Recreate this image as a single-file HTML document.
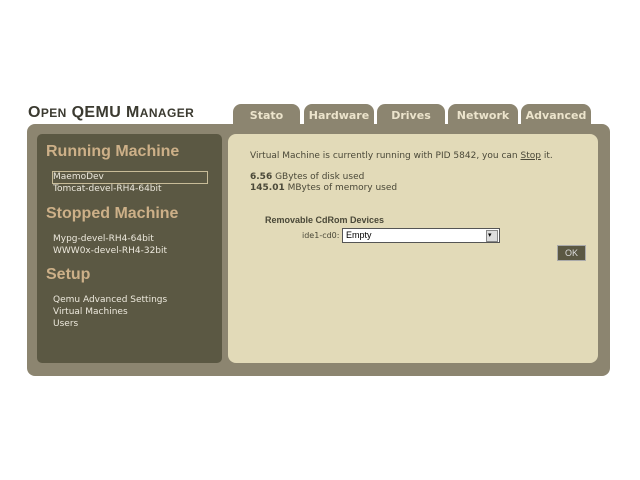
<!DOCTYPE html>
<html><head><style>
body{margin:0;width:640px;height:480px;background:#fff;position:relative;font-family:"DejaVu Sans",Verdana,sans-serif;overflow:hidden}
.a{position:absolute}
.title{left:28px;top:104px;font:bold 16px "Liberation Sans",sans-serif;color:#3b3a30;letter-spacing:0.4px}
.title small{font-size:12px}
.outer{left:27px;top:124px;width:583px;height:252px;background:#8c8570;border-radius:8px}
.left{left:37px;top:134px;width:185px;height:229px;background:#5b5843;border-radius:5px}
.right{left:228px;top:134px;width:370px;height:229px;background:#e2dab8;border-radius:8px}
.tab{top:104px;height:24px;background:#8c8570;border-radius:8px 8px 0 0;color:#ece4cc;font:bold 11px "DejaVu Sans",sans-serif;text-align:center;line-height:24px}
h2{position:absolute;margin:0;font:bold 16px "Liberation Sans",sans-serif;color:#cdb088;left:46px}
.lk{position:absolute;left:53px;font-size:9px;color:#ece8dc;line-height:12px}
.t{font-size:9px;color:#4a4838;position:absolute}
</style></head><body>
<div class="a title">O<small>PEN</small> QEMU M<small>ANAGER</small></div>
<div class="a tab" style="left:233px;width:67px">Stato</div>
<div class="a tab" style="left:304px;width:70px">Hardware</div>
<div class="a tab" style="left:377px;width:68px">Drives</div>
<div class="a tab" style="left:448px;width:70px">Network</div>
<div class="a tab" style="left:521px;width:70px">Advanced</div>
<div class="a outer"></div>
<div class="a left"></div>
<div class="a right"></div>
<h2 style="top:143px">Running Machine</h2>
<div class="a" style="left:52px;top:171px;width:154px;height:11px;border:1px solid #c8bc98"></div>
<div class="lk" style="top:171px">MaemoDev<br>Tomcat-devel-RH4-64bit</div>
<h2 style="top:205px">Stopped Machine</h2>
<div class="lk" style="top:233px">Mypg-devel-RH4-64bit<br>WWW0x-devel-RH4-32bit</div>
<h2 style="top:266px">Setup</h2>
<div class="lk" style="top:294px">Qemu Advanced Settings<br>Virtual Machines<br>Users</div>
<div class="t" style="left:250px;top:151px">Virtual Machine is currently running with PID 5842, you can <u>Stop</u> it.</div>
<div class="t" style="left:250px;top:172px;line-height:11px"><b>6.56</b> GBytes of disk used<br><b>145.01</b> MBytes of memory used</div>
<div class="t" style="left:265px;top:215px;font:bold 9px 'Liberation Sans',sans-serif;color:#4a4838">Removable CdRom Devices</div>
<div class="t" style="left:302px;top:231px;font-size:8px">ide1-cd0:</div>
<div class="a" style="left:342px;top:228px;width:156px;height:13px;background:#fff;border:1px solid #555;font:9px 'Liberation Sans',sans-serif;line-height:13px;text-indent:3px">Empty<div class="a" style="right:1px;top:1px;width:10px;height:10px;background:#ddd;border:1px solid #888;font-size:7px;line-height:10px;text-indent:1px">▾</div></div>
<div class="a" style="left:557px;top:245px;width:27px;height:14px;background:#5b5843;border:1px solid #aaa;color:#ddd;font:9px 'Liberation Sans',sans-serif;text-align:center;line-height:14px">OK</div>
</body></html>
